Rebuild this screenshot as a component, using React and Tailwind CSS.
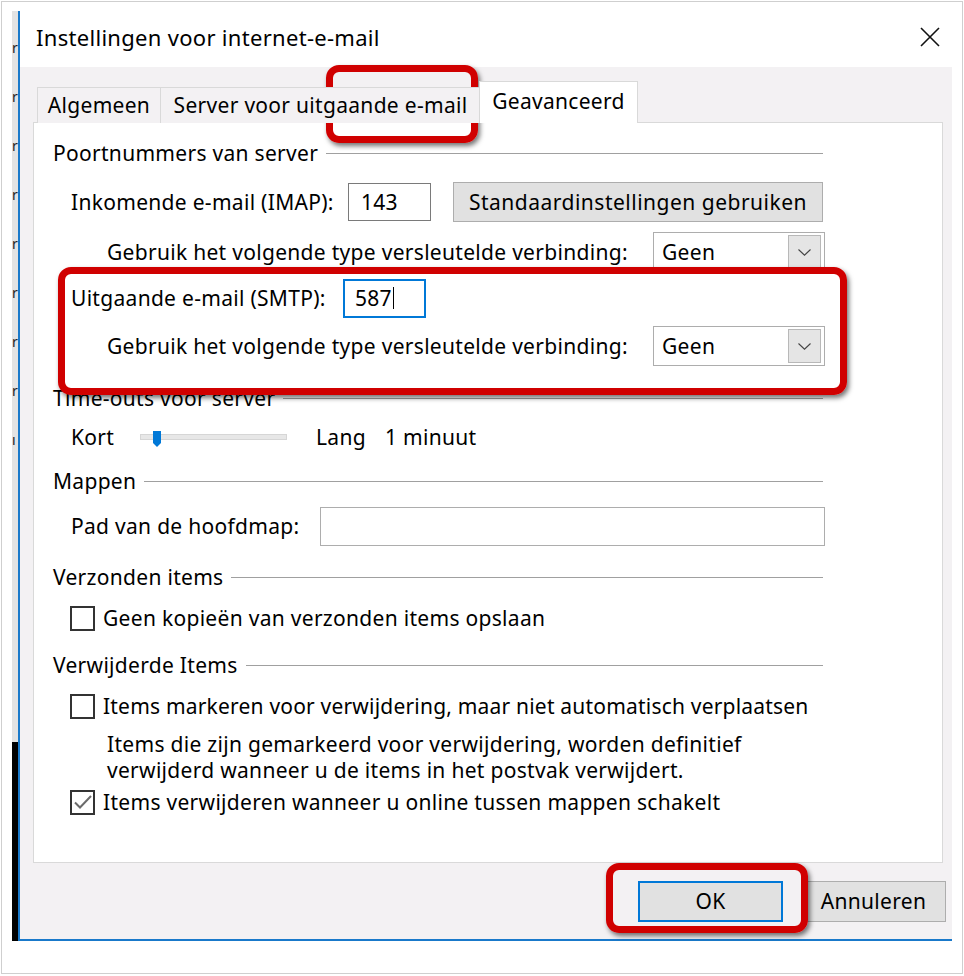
import React from "react";

function Header({ children, className = "" }) {
  return (
    <div className={`flex items-center h-[24px] ${className}`}>
      <span className="whitespace-nowrap">{children}</span>
      <div className="ml-[8px] mr-[2px] flex-1 h-px bg-[#a0a0a0]" />
    </div>
  );
}

function Select() {
  return (
    <div className="w-[172px] h-[40px] border border-[#adadad] bg-white flex items-center justify-between pl-[8px] pr-[3px]">
      <span>Geen</span>
      <div className="w-[33px] h-[34px] bg-[#e5e5e5] border border-[#b8b8b8] flex items-center justify-center">
        <svg width="13" height="7" viewBox="0 0 13 7">
          <path d="M0.5 0.5 L6.5 6.2 L12.5 0.5" stroke="#444" fill="none" strokeWidth="1.1" />
        </svg>
      </div>
    </div>
  );
}

function Checkbox({ checked }) {
  return (
    <div className="w-[25px] h-[25px] border-2 border-[#333] bg-white flex items-center justify-center shrink-0">
      {checked && (
        <svg width="21" height="21" viewBox="0 0 21 21">
          <path d="M3 10.5 L8 15.5 L19 4" stroke="#6b6b6b" strokeWidth="2" fill="none" />
        </svg>
      )}
    </div>
  );
}

function LeftStrip() {
  const letters = ["r", "r", "r", "r", "r", "r", "r", "r", "ı"];
  return (
    <div className="w-[6px] h-[930px] flex flex-col shrink-0">
      <div className="h-[731px] bg-[#e3e3e3] overflow-hidden pt-[12px] flex flex-col">
        {letters.map((l, i) => (
          <div key={i} className="h-[49px] flex items-center justify-start text-[14px] tracking-normal text-[#222] whitespace-nowrap">
            {l}
          </div>
        ))}
      </div>
      <div className="flex-1 bg-black" />
    </div>
  );
}

export default function App() {
  return (
    <div className="w-[964px] h-[976px] bg-white pt-px pl-px relative font-['Noto_Sans',sans-serif] text-black text-[21px] tracking-[0.3px] leading-none">
      <div className="w-[962px] h-[973px] border border-[#cfcfcf] pt-[9px] pl-[10px]">
        <div className="flex w-[940px] h-[930px]">
          <LeftStrip />
          <div className="w-[934px] h-[930px] border-l-2 border-b-2 border-[#1979ca] flex flex-col">
            {/* Title bar */}
            <div className="h-[56px] bg-white flex items-center justify-between pl-[16px] pr-[12px]">
              <span className="text-[22px] tracking-[0.3px] pb-[5px]">Instellingen voor internet-e-mail</span>
              <svg width="20" height="20" viewBox="0 0 20 20" className="mb-[4px]">
                <path d="M1 1 L19 19 M19 1 L1 19" stroke="#111" strokeWidth="1.6" />
              </svg>
            </div>
            {/* Body */}
            <div className="flex-1 bg-[#f3f1f3] pt-[14px] pl-[13px]">
              {/* Tabs */}
              <div className="flex items-end h-[42px] pl-[4px] -mb-px relative z-10">
                <div className="w-[124px] h-[36px] border border-b-0 border-[#d9d9d9] bg-[#f3f1f3] flex items-center justify-center">
                  Algemeen
                </div>
                <div className="-ml-px w-[321px] h-[36px] border border-b-0 border-[#d9d9d9] bg-[#f3f1f3] flex items-center justify-center">
                  Server voor uitgaande e-mail
                </div>
                <div className="-ml-[2px] w-[159px] h-[42px] border border-b-0 border-[#d9d9d9] bg-white flex items-center justify-center pb-[2px]">
                  Geavanceerd
                </div>
              </div>
              {/* Panel */}
              <div className="w-[910px] h-[741px] border border-[#d9d9d9] bg-white pl-[19px] pt-[18px]">
                <div className="w-[772px] flex flex-col">
                  <Header>Poortnummers van server</Header>

                  <div className="mt-[17px] h-[40px] flex items-center ml-[18px]">
                    <span className="w-[277px] shrink-0">Inkomende e-mail (IMAP):</span>
                    <div className="w-[83px] h-[38px] border border-[#7a7a7a] flex items-center pl-[12px]">143</div>
                    <div className="ml-[22px] w-[370px] h-[40px] border border-[#adadad] bg-[#e1e1e1] flex items-center justify-center tracking-[0.5px]">
                      Standaardinstellingen gebruiken
                    </div>
                  </div>

                  <div className="mt-[10px] h-[40px] flex items-center ml-[54px]">
                    <span className="w-[546px] shrink-0">Gebruik het volgende type versleutelde verbinding:</span>
                    <Select />
                  </div>

                  <div className="mt-[6px] h-[40px] flex items-center ml-[18px]">
                    <span className="w-[272px] shrink-0">Uitgaande e-mail (SMTP):</span>
                    <div className="w-[83px] h-[39px] border-2 border-[#0078d7] flex items-center pl-[10px]">
                      587<span className="ml-[1px] w-[1.5px] h-[22px] bg-black" />
                    </div>
                  </div>

                  <div className="mt-[8px] h-[40px] flex items-center ml-[54px]">
                    <span className="w-[546px] shrink-0">Gebruik het volgende type versleutelde verbinding:</span>
                    <Select />
                  </div>

                  <Header className="mt-[20px]">Time-outs voor server</Header>

                  <div className="mt-[15px] h-[24px] flex items-center ml-[18px]">
                    <span className="w-[69px] shrink-0">Kort</span>
                    <div className="relative w-[147px] h-[6px] bg-[#e7e7e7] border border-[#d6d6d6]">
                      <svg className="absolute left-[12px] -top-[4px]" width="8" height="16" viewBox="0 0 8 16">
                        <path d="M0 0 H8 V12 L4 16 L0 12 Z" fill="#0078d7" />
                      </svg>
                    </div>
                    <span className="ml-[29px] w-[69px] shrink-0">Lang</span>
                    <span>1 minuut</span>
                  </div>

                  <Header className="mt-[20px]">Mappen</Header>

                  <div className="mt-[13px] h-[40px] flex items-center ml-[18px]">
                    <span className="w-[249px] shrink-0">Pad van de hoofdmap:</span>
                    <div className="w-[505px] h-[39px] border border-[#adadad] bg-white" />
                  </div>

                  <Header className="mt-[19px]">Verzonden items</Header>

                  <div className="mt-[16px] h-[26px] flex items-center ml-[17px]">
                    <Checkbox />
                    <span className="ml-[8px]">Geen kopieën van verzonden items opslaan</span>
                  </div>

                  <Header className="mt-[22px]">Verwijderde Items</Header>

                  <div className="mt-[16px] h-[26px] flex items-center ml-[17px]">
                    <Checkbox />
                    <span className="ml-[8px] whitespace-nowrap tracking-[0.2px]">Items markeren voor verwijdering, maar niet automatisch verplaatsen</span>
                  </div>

                  <div className="mt-[12px] ml-[54px] flex flex-col">
                    <div className="h-[26px] flex items-center whitespace-nowrap">Items die zijn gemarkeerd voor verwijdering, worden definitief</div>
                    <div className="h-[26px] flex items-center whitespace-nowrap">verwijderd wanneer u de items in het postvak verwijdert.</div>
                  </div>

                  <div className="mt-[6px] h-[26px] flex items-center ml-[17px]">
                    <Checkbox checked />
                    <span className="ml-[8px] whitespace-nowrap">Items verwijderen wanneer u online tussen mappen schakelt</span>
                  </div>
                </div>
              </div>
              {/* Buttons */}
              <div className="mt-[18px] flex justify-end pr-[6px]">
                <div className="w-[145px] h-[41px] border-2 border-[#0078d7] bg-[#e1e1e1] flex items-center justify-center">OK</div>
                <div className="ml-[18px] w-[145px] h-[41px] border border-[#adadad] bg-[#e1e1e1] flex items-center justify-center">Annuleren</div>
              </div>
            </div>
          </div>
        </div>
      </div>

      {/* Red annotation boxes */}
      <div className="absolute left-[326px] top-[65px] w-[152px] h-[78px] border-[7px] border-[#d00000] rounded-[13px] shadow-[2px_3px_5px_rgba(0,0,0,0.55)]" />
      <div className="absolute left-[58px] top-[267px] w-[789px] h-[128px] border-[7px] border-[#d00000] rounded-[13px] shadow-[2px_3px_5px_rgba(0,0,0,0.55)]" />
      <div className="absolute left-[606px] top-[863px] w-[202px] h-[70px] border-[7px] border-[#d00000] rounded-[13px] shadow-[2px_3px_5px_rgba(0,0,0,0.55)]" />
    </div>
  );
}
